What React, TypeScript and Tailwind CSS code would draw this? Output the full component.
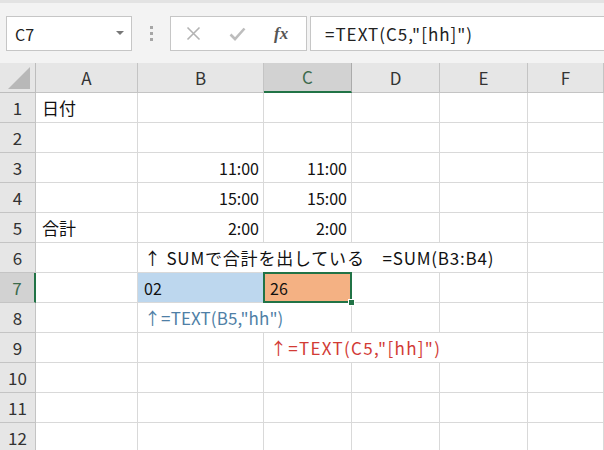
import React from 'react';

const font = { fontFamily: '"Noto Sans CJK JP", "Noto Sans", sans-serif' };

const cols = ['A', 'B', 'C', 'D', 'E', 'F'];

type Cell = {
  text?: string;
  span?: number;
  align?: 'left' | 'right';
  color?: string;
  bg?: string;
  size?: string;
  selected?: boolean;
};

// row number -> cells (A..F), spans cover overflowing text
const rows: Record<number, Cell[]> = {
  1: [{ text: '日付', size: 'text-[17px]' }, {}, {}, {}, {}, {}],
  3: [{}, { text: '11:00', align: 'right' }, { text: '11:00', align: 'right' }, {}, {}, {}],
  4: [{}, { text: '15:00', align: 'right' }, { text: '15:00', align: 'right' }, {}, {}, {}],
  5: [{ text: '合計', size: 'text-[17px]' }, { text: '2:00', align: 'right' }, { text: '2:00', align: 'right' }, {}, {}, {}],
  6: [{}, { text: '↑ SUMで合計を出している　=SUM(B3:B4)', span: 4, size: 'text-[17px] tracking-[0.8px]' }, {}],
  7: [{}, { text: '02', bg: 'bg-[#bdd7ee]' }, { text: '26', bg: 'bg-[#f4b183]', selected: true }, {}, {}, {}],
  8: [{}, { text: '↑=TEXT(B5,"hh")', span: 2, color: 'text-[#4f7fa6]', size: 'text-[17px] tracking-[0.1px]' }, {}, {}, {}],
  9: [{}, {}, { text: '↑=TEXT(C5,"[hh]")', span: 3, color: 'text-[#d23b35]', size: 'text-[17px] tracking-[1.3px]' }, {}],
};

const spanClass: Record<number, string> = {
  1: 'col-span-1',
  2: 'col-span-2',
  3: 'col-span-3',
  4: 'col-span-4',
};

function Toolbar() {
  return (
    <div className="h-[63px] bg-[#f3f3f3] border-t-[3px] border-[#e3e3e3] relative flex items-start pt-[13px] pl-[6px]">
      <div className="w-[126px] h-[35px] bg-white border border-[#c6c6c6] flex items-center justify-between pl-[8px] pr-[7px]">
        <span className="text-[16px] text-[#222]">C7</span>
        <svg width="8" height="5" viewBox="0 0 8 5">
          <path d="M0 0h8L4 4z" fill="#777" />
        </svg>
      </div>
      <div className="w-[38px] h-[35px] flex flex-col items-center justify-center gap-[3px]">
        <div className="w-[3px] h-[3px] bg-[#a6a6a6]" />
        <div className="w-[3px] h-[3px] bg-[#a6a6a6]" />
        <div className="w-[3px] h-[3px] bg-[#a6a6a6]" />
      </div>
      <div className="w-[137px] h-[35px] bg-white border border-[#c6c6c6] flex items-center pl-[15px] gap-[28px]">
        <svg width="15" height="15" viewBox="0 0 15 15">
          <path d="M1.5 1.5l12 12M13.5 1.5l-12 12" stroke="#b3b3b3" strokeWidth="1.6" />
        </svg>
        <svg width="17" height="14" viewBox="0 0 17 14">
          <path d="M1.5 7.5l4.5 4.5 9.5-10.5" stroke="#bdbdbd" strokeWidth="2.6" fill="none" />
        </svg>
        <span className="text-[17px] italic font-bold text-[#555] leading-none" style={{ fontFamily: '"Liberation Serif", serif' }}>
          fx
        </span>
      </div>
      <div className="ml-[3px] flex-1 h-[35px] bg-white border border-[#c6c6c6] border-r-0 flex items-center pl-[14px]">
        <span className="text-[17px] tracking-[1px] text-[#222]">=TEXT(C5,"[hh]")</span>
      </div>
    </div>
  );
}

export default function App() {
  return (
    <div className="w-[604px] h-[450px] overflow-hidden bg-white" style={font}>
      <Toolbar />
      <div className="grid grid-cols-[36px_102px_126px_88px_88px_88px_76px]">
        {/* header row */}
        <div className="h-[30px] bg-[#e6e6e6] border-r border-b border-[#bdbdbd] flex items-end justify-end pr-[5px] pb-[3px]">
          <svg width="22" height="22" viewBox="0 0 22 22">
            <path d="M22 0V22H0z" fill="#b8b8b8" />
          </svg>
        </div>
        {cols.map((c) =>
          c === 'C' ? (
            <div
              key={c}
              className="h-[30px] bg-[#d2d2d2] border-r border-[#ababab] border-b-2 border-b-[#217346] flex items-center justify-center text-[17px] text-[#3d6b4c]"
            >
              {c}
            </div>
          ) : (
            <div
              key={c}
              className="h-[30px] bg-[#e6e6e6] border-r border-b border-[#c4c4c4] flex items-center justify-center text-[17px] text-[#333]"
            >
              {c}
            </div>
          )
        )}

        {Array.from({ length: 12 }, (_, i) => i + 1).map((r) => {
          const cells = rows[r] ?? [{}, {}, {}, {}, {}, {}];
          return (
            <React.Fragment key={r}>
              <div
                className={
                  r === 7
                    ? 'h-[30px] bg-[#d2d2d2] border-r-2 border-r-[#217346] border-b border-b-[#c4c4c4] flex items-center justify-center text-[17px] text-[#3d6b4c]'
                    : 'h-[30px] bg-[#e6e6e6] border-r border-b border-[#c4c4c4] flex items-center justify-center text-[17px] text-[#333]'
                }
              >
                {r}
              </div>
              {cells.map((cell, j) => (
                <div
                  key={j}
                  className={[
                    'h-[30px] border-r border-b border-[#d9d9d9] flex items-center whitespace-nowrap relative',
                    spanClass[cell.span ?? 1],
                    cell.align === 'right' ? 'justify-end pr-[4px]' : 'pl-[6px]',
                    cell.size ?? 'text-[16px]',
                    cell.color ?? 'text-[#111]',
                    cell.bg ?? '',
                  ].join(' ')}
                >
                  {cell.text}
                  {cell.selected && (
                    <>
                      <div className="absolute z-10 left-[-1px] top-[-1px] right-[-1px] bottom-[-1px] border-2 border-[#217346]" />
                      <div className="absolute z-20 right-[-4px] bottom-[-4px] w-[7px] h-[7px] bg-[#217346] border border-white" />
                    </>
                  )}
                </div>
              ))}
            </React.Fragment>
          );
        })}
      </div>
    </div>
  );
}
